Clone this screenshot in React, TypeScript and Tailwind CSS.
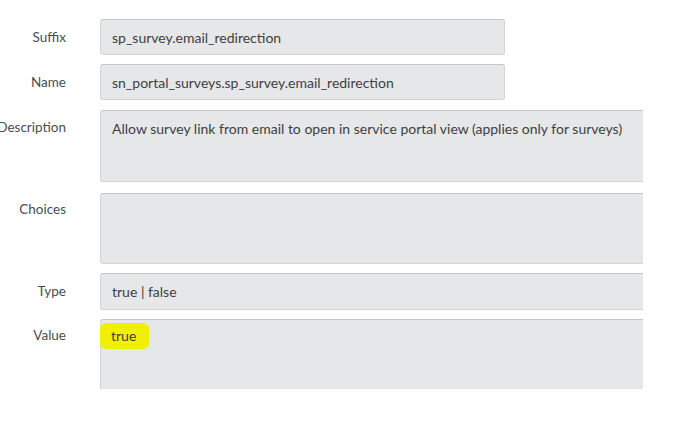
export default function App() {
  const box = "rounded-[3px] border border-[#d3d4d6] border-t-[#c4c5c7] bg-[#e6e7e9] text-[14px] text-[#3d3f42]";
  const label = "w-[66px] shrink-0 flex justify-end whitespace-nowrap text-[13.5px] text-[#4a4d50]";

  return (
    <div className="w-[684px] h-[422px] bg-white overflow-hidden font-['Lato',sans-serif] pt-[19px]">
      <div className="flex flex-col">
        {/* Suffix */}
        <div className="flex items-center gap-[34px]">
          <div className={label}>Suffix</div>
          <div className={`${box} w-[405px] h-[36px] flex items-center pl-[11px]`}>sp_survey.email_redirection</div>
        </div>

        {/* Name */}
        <div className="flex items-center gap-[34px] mt-[9px]">
          <div className={label}>Name</div>
          <div className={`${box} w-[405px] h-[36px] flex items-center pl-[11px]`}>sn_portal_surveys.sp_survey.email_redirection</div>
        </div>

        {/* Description */}
        <div className="flex items-start gap-[34px] mt-[10px]">
          <div className={`${label} pt-[7px]`}>Description</div>
          <div className={`${box} w-[543px] h-[72px] pl-[11px] pt-[7px] rounded-r-none border-r-0`}>
            Allow survey link from email to open in service portal view (applies only for surveys)
          </div>
        </div>

        {/* Choices */}
        <div className="flex items-start gap-[34px] mt-[11px]">
          <div className={`${label} pt-[6px]`}>Choices</div>
          <div className={`${box} w-[543px] h-[71px] rounded-r-none border-r-0`}></div>
        </div>

        {/* Type */}
        <div className="flex items-center gap-[34px] mt-[9px]">
          <div className={label}>Type</div>
          <div className={`${box} w-[543px] h-[37px] flex items-center pl-[11px] rounded-r-none border-r-0`}>true | false</div>
        </div>

        {/* Value */}
        <div className="flex items-start gap-[34px] mt-[9px]">
          <div className={`${label} pt-[6px]`}>Value</div>
          <div className={`${box} w-[543px] h-[70px] border-b-0 rounded-b-none rounded-r-none border-r-0 pt-[3px]`}>
            <span className="inline-block bg-[#f0f000] rounded-[6px] pl-[11px] pr-[13px] py-[5px] ml-[-1px] leading-[16px]">true</span>
          </div>
        </div>
      </div>
    </div>
  );
}
